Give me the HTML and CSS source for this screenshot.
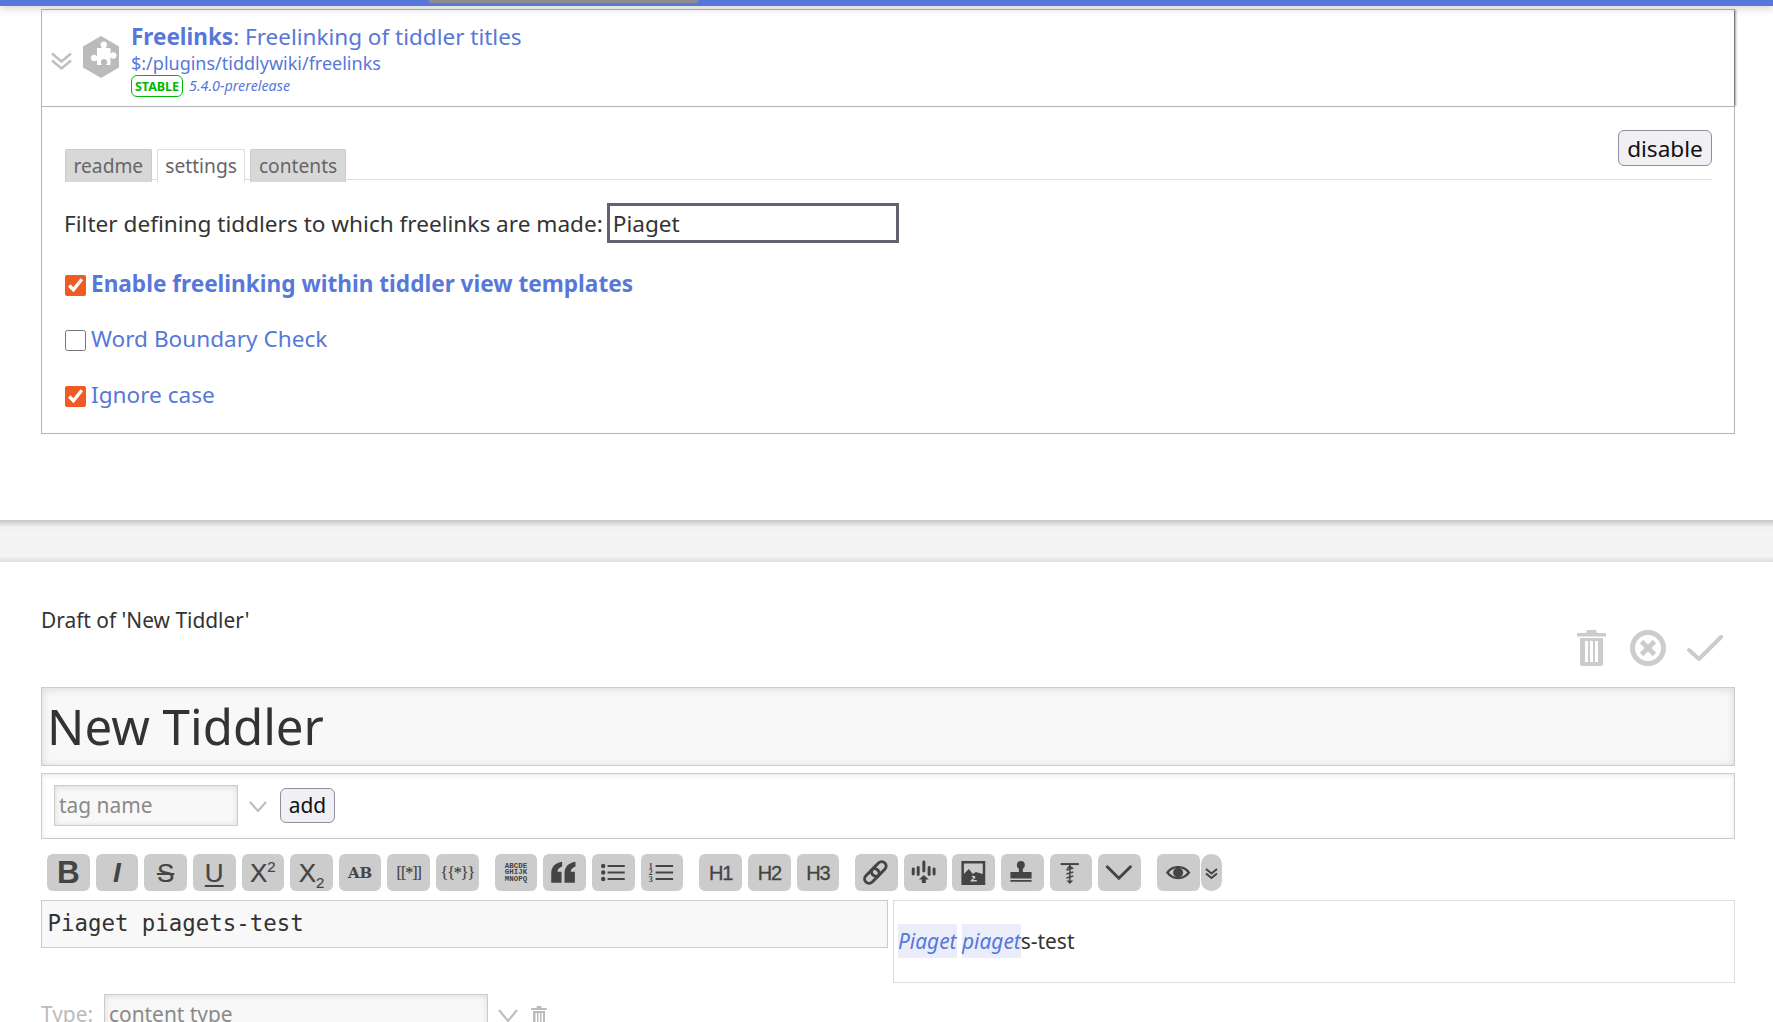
FILE: index.html
```html
<!DOCTYPE html>
<html lang="en">
<head>
<meta charset="utf-8">
<title>Freelinks</title>
<link rel="stylesheet" href="styles.css">
</head>
<body>
<div class="topbar"><div class="progress"></div></div>
<main class="main">
  <section class="plugin">
    <header class="plugin-head">
      <svg class="chev" viewBox="0 0 21 18"><path d="M1 1.500l9.500 8 9.500-8M1 8.500l9.500 8 9.500-8"/></svg>
      <svg class="hex" viewBox="0 0 36 42"><path class="hex-bg" d="M18 0L36 10.500V31.500L18 42L0 31.500V10.500Z"/><path class="hex-fg" d="M14 12h5c-1-1.500-1.500-2.500-1.500-3.500 0-2 1.600-3 3.300-3s3.200 1 3.200 3c0 1-.5 2-1.500 3.500h5v5.500c1.200-.9 2-1.300 3-1.300 1.900 0 3 1.500 3 3.300s-1.100 3.300-3 3.300c-1 0-1.800-.4-3-1.300V29h-4.500c.8-1.200 1.200-2 1.200-3 0-1.800-1.500-3-3.200-3s-3.200 1.200-3.200 3c0 1 .4 1.800 1.200 3H14v-5c-1.200.9-2 1.200-3 1.200-1.900 0-3.200-1.400-3.200-3.200s1.300-3.200 3.200-3.200c1 0 1.800.3 3 1.200Z"/></svg>
      <div class="plugin-info">
        <div class="plugin-title"><b>Freelinks</b>: Freelinking of tiddler titles</div>
        <div class="plugin-path">$:/plugins/tiddlywiki/freelinks</div>
        <div class="plugin-meta"><span class="stable">STABLE</span><i class="version">5.4.0-prerelease</i></div>
      </div>
    </header>
    <div class="plugin-body">
      <div class="tabs">
        <div class="tab-list">
          <span class="tab">readme</span>
          <span class="tab tab-active">settings</span>
          <span class="tab">contents</span>
        </div>
        <button class="disable">disable</button>
      </div>
      <div class="filter-row">
        <span>Filter defining tiddlers to which freelinks are made:</span>
        <input class="filter-input" value="Piaget">
      </div>
      <label class="check-row check-first"><input type="checkbox" checked><b>Enable freelinking within tiddler view templates</b></label>
      <label class="check-row"><input type="checkbox">Word Boundary Check</label>
      <label class="check-row"><input type="checkbox" checked>Ignore case</label>
    </div>
  </section>
</main>
<div class="band"></div>
<main class="main">
  <div class="draft-head">
    <div class="draft-title">Draft of 'New Tiddler'</div>
    <div class="draft-actions">
      <svg class="act-trash" viewBox="0 0 29 36"><path d="M10 0h9l1 3h8a1.500 1.500 0 0 1 0 3.500H1A1.500 1.500 0 0 1 1 3h8ZM3 8h23v26a2 2 0 0 1-2 2H5a2 2 0 0 1-2-2ZM8 11v21h3V11Zm5 0v21h3V11Zm5 0v21h3V11Z" fill-rule="evenodd"/></svg>
      <svg class="act-close" viewBox="0 0 36 36"><circle cx="18" cy="18" r="15.500"/><path d="M11.500 11.500l13 13M24.500 11.500l-13 13"/></svg>
      <svg class="act-check" viewBox="0 0 36 26"><path d="M2 15l10 9L34 2"/></svg>
    </div>
  </div>
  <input class="title-input" value="New Tiddler">
  <div class="tag-box">
    <input class="tag-input" placeholder="tag name">
    <svg class="tag-chev" viewBox="0 0 18 11"><path d="M1 1l8 9 8-9"/></svg>
    <button class="add">add</button>
  </div>
  <div class="toolbar">
    <div class="tb-group">
      <span class="tb t-bold">B</span>
      <span class="tb t-ital">I</span>
      <span class="tb t-reg"><span class="t-strike">S</span></span>
      <span class="tb t-reg"><span class="t-under">U</span></span>
      <span class="tb t-reg"><span>X<sup>2</sup></span></span>
      <span class="tb t-reg"><span>X<sub>2</sub></span></span>
      <span class="tb t-ab">AB</span>
      <span class="tb t-code">[[*]]</span>
      <span class="tb t-code">{{*}}</span>
    </div>
    <div class="tb-group">
      <span class="tb t-alpha"><span>ABCDE<br>GHIJK<br>MNOPQ</span></span>
      <span class="tb"><svg class="ic" viewBox="0 0 43 37"><path class="fill" d="M8.300 19C8.300 13 12 9 19.300 7.700V12.500C17 13.200 15 14.500 14.500 17.700H18.700V28.700H8.300Z"/><path class="fill" d="M21.700 19C21.700 13 25.400 9 32.700 7.700V12.500C30.400 13.200 28.400 14.500 27.900 17.700H32.100V28.700H21.700Z"/></svg></span>
      <span class="tb"><svg class="ic" viewBox="0 0 43 37"><circle class="fill" cx="11.300" cy="12" r="2.200"/><circle class="fill" cx="11.300" cy="18.500" r="2.200"/><circle class="fill" cx="11.300" cy="25" r="2.200"/><path class="line" d="M15.700 12H33M15.700 18.500H33M15.700 25H33"/></svg></span>
      <span class="tb"><svg class="ic" viewBox="0 0 43 37"><text class="num" x="7.700" y="14.500">1</text><text class="num" x="7.700" y="21.500">2</text><text class="num" x="7.700" y="28">3</text><path class="line" d="M14.700 12H32.300M14.700 18.500H32.300M14.700 25H32.300"/></svg></span>
    </div>
    <div class="tb-group">
      <span class="tb t-h">H1</span>
      <span class="tb t-h">H2</span>
      <span class="tb t-h">H3</span>
    </div>
    <div class="tb-group">
      <span class="tb"><svg class="ic" viewBox="0 0 43 37"><g class="line thick"><rect x="19.500" y="6.400" width="9" height="17" rx="4.500" transform="rotate(45 24 14.900)"/><rect x="12.500" y="13.600" width="9" height="17" rx="4.500" transform="rotate(45 17 22.100)"/></g></svg></span>
      <span class="tb"><svg class="ic" viewBox="0 0 43 37"><path class="line thick" d="M9.300 15v5M14.300 13.500v7M20 8v9M25.300 13.500v7M30.300 15v5"/><path class="fill" d="M20 21l5 4.500h-3v3.500h-4v-3.500h-3Z"/></svg></span>
      <span class="tb"><svg class="ic" viewBox="0 0 43 37"><path class="fill" fill-rule="evenodd" d="M9.500 7h24v24h-24ZM12 9.500V20l5-5 4 5 3-2 7 2V9.500ZM20 22c2-.5 4 .5 3.500 2l-2.500 2h4v1.500h-6.500c0-2 3.500-2.500 3-3.800-.3-.5-1-.5-1.500 0Z"/></svg></span>
      <span class="tb"><svg class="ic" viewBox="0 0 43 37"><circle class="fill" cx="20" cy="11" r="4"/><path class="fill" d="M18 13h4v5h8.800v6.500H9.500V18H18ZM9.500 26h21.300v1.800H9.500Z"/></svg></span>
      <span class="tb"><svg class="ic" viewBox="0 0 43 37"><path class="line" d="M10.700 10H29"/><path class="zig" d="M20 11v18M16.500 16l7-2M16.500 20l7-2M16.500 24l7-2"/><path class="fill" d="M20 11l3.500 3.500h-7ZM20 30l-3.500-3.500h7Z"/></svg></span>
      <span class="tb"><svg class="ic" viewBox="0 0 43 37"><path class="line thick" d="M9.300 12.700L21 24.300 32.700 12.700"/></svg></span>
    </div>
    <div class="tb-group tb-last">
      <span class="tb"><svg class="ic" viewBox="0 0 43 37"><path class="fill" fill-rule="evenodd" d="M9 18.600C12 14 16.500 12 21.300 12s9.300 2 12.300 6.600c-3 4.600-7.500 6.700-12.300 6.700S12 23.200 9 18.600ZM12 18.600c2.500 3 5.700 4.700 9.300 4.700s6.800-1.700 9.300-4.700c-2.500-3-5.700-4.600-9.300-4.600s-6.800 1.600-9.300 4.600Z"/><circle class="fill" cx="21.300" cy="18.600" r="5"/></svg></span>
      <span class="tb tb-more"><svg class="ic" viewBox="0 0 21 37"><path class="line" d="M5 15l5.500 4.500L16 15M5 19.500l5.500 4.500 5.500-4.500"/></svg></span>
    </div>
  </div>
  <div class="editor">
    <div class="editor-text">Piaget piagets-test</div>
    <div class="preview"><a class="hl">Piaget</a> <a class="hl">piaget</a>s-test</div>
  </div>
  <div class="type-row">
    <span class="type-label">Type:</span>
    <input class="type-input" placeholder="content type">
    <svg class="type-chev" viewBox="0 0 20 13"><path d="M1 1l9 11 9-11"/></svg>
    <svg class="type-trash" viewBox="0 0 16 20"><path d="M6 0h4l.5 2H15a1 1 0 0 1 0 2H1a1 1 0 0 1 0-2h4.500ZM2 5h12v15H2ZM4.500 7v13h1.500V7Zm3 0v13h1.500V7Zm3 0v13h1.500V7Z" fill-rule="evenodd"/></svg>
  </div>
</main>
</body>
</html>
```
FILE: styles.css
```css
* { box-sizing: border-box; }
html, body { margin: 0; height: 100%; overflow: hidden; background: #fff; }
body { font-family: "Noto Sans", sans-serif; font-size: 22.6px; color: #333; }

.topbar { height: 6px; background: #5778d8; box-shadow: 0 2px 8px rgba(0,0,0,.22); }
.progress { width: 269px; height: 3px; margin-left: 429px; background: #8c8c90; }

.main { padding: 3px 38px 0 41px; }

.plugin { border: 1px solid #b5b5b5; border-top-color: #aaa; height: 425px; }
.plugin-head { height: 98px; display: flex; align-items: flex-start; border-bottom: 1px solid #b5b5b5; box-shadow: 3px 0 2px -1px rgba(0,0,0,.35); margin-top: -1px; }
.chev { width: 21px; height: 18px; margin: 43px 0 0 9px; flex: none; }
.chev path { fill: none; stroke: #c0c0c0; stroke-width: 2.500; }
.hex { width: 36px; height: 42px; margin: 27px 0 0 11px; flex: none; }
.hex-bg { fill: #bbb; }
.hex-fg { fill: #fff; }
.plugin-info { margin: 12px 0 0 12px; color: #5778d8; }
.plugin-title { font-size: 22.500px; line-height: 32px; }
.plugin-path { font-size: 18px; line-height: 26px; margin-top: -3px; }
.plugin-meta { display: flex; align-items: center; height: 22px; margin-top: -1px; }
.stable { width: 52px; height: 22px; border: 1px solid #00b800; border-radius: 6px; color: #00b800; font-size: 12.500px; font-weight: 700; display: flex; align-items: center; justify-content: center; }
.version { font-size: 14.300px; margin: -2px 0 0 6px; }

.plugin-body { padding: 23px 22px 0 23px; }
.tabs { display: flex; justify-content: space-between; align-items: flex-start; height: 50px; border-bottom: 1px solid #dedede; }
.tab-list { display: flex; gap: 5px; margin-top: 19px; }
.tab { height: 33px; background: #d8d8d8; border: 1px solid #ccc; border-bottom: none; border-radius: 2px 2px 0 0; padding: 0 7.500px; font-size: 19.200px; line-height: 32px; color: #666; }
.tab-active { background: #fff; border-color: #ddd; }
.disable { width: 94px; height: 36px; padding: 0; background: #efeff4; border: 1px solid #8f8f9d; border-radius: 6px; font: 22.600px "Noto Sans", sans-serif; color: #111; }

.filter-row { display: flex; align-items: center; gap: 4px; margin: 23px 0 0 -1px; height: 40px; }
.filter-input { width: 292px; height: 40px; border: 3px solid #626270; padding: 0 3px; font: 22.600px "Noto Sans", sans-serif; color: #333; background: #fff; outline: none; }

.check-row { display: flex; align-items: center; color: #5778d8; height: 32px; margin-top: 23.500px; gap: 5px; }
.check-first { margin-top: 24px; }
.check-row input { width: 21px; height: 21px; margin: 4px 0 0; accent-color: #f05a24; flex: none; }

.band { height: 42px; margin-top: 86px; background: linear-gradient(#c6c6c6, #f0f0f0 7px, #f4f4f4 12px, #f4f4f4 36px, #dedede); }

.draft-head { display: flex; justify-content: space-between; align-items: flex-start; height: 122px; padding-top: 39px; }
.draft-title { font-size: 20.900px; line-height: 32px; color: #333; }
.draft-actions { display: flex; align-items: center; margin-top: 26px; height: 36px; }
.act-trash { width: 29px; height: 36px; fill: #ccc; }
.act-close { width: 36px; height: 36px; margin-left: 24px; fill: none; stroke: #ccc; stroke-width: 5; }
.act-check { width: 36px; height: 26px; margin: 0 12px 0 21px; fill: none; stroke: #ccc; stroke-width: 4; stroke-linecap: round; stroke-linejoin: round; }

.title-input { display: block; width: 100%; height: 79px; padding: 0 5px 2px; border: 1px solid #ccc; background: #f8f8f8; box-shadow: inset 0 1px 8px rgba(0,0,0,.13); font: 49.200px "Noto Sans", sans-serif; color: #333; outline: none; }

.tag-box { display: flex; align-items: center; height: 66px; margin-top: 7px; border: 1px solid #ccc; background: #fff; box-shadow: inset 0 1px 5px rgba(0,0,0,.1); padding: 0 0 2px 12px; }
.tag-input { width: 184px; height: 41px; padding: 0 4px; border: 1px solid #ccc; background: #f8f8f8; box-shadow: inset 0 1px 6px rgba(0,0,0,.12); font: 20.900px "Noto Sans", sans-serif; outline: none; }
.tag-input::placeholder, .type-input::placeholder { color: #8a8a8a; opacity: 1; }
.tag-chev { width: 18px; height: 11px; margin: 3px 0 0 11px; fill: none; stroke: #bbb; stroke-width: 2; }
.add { width: 55px; height: 35px; margin-left: 13px; padding: 0; background: #efeff4; border: 1px solid #8f8f9d; border-radius: 6px; font: 20.900px "Noto Sans", sans-serif; color: #111; }

.toolbar { display: flex; gap: 16px; margin: 15px 0 0 6px; }
.tb-group { display: flex; gap: 5.950px; }
.tb-last { gap: 1px; }
.tb { width: 42.700px; height: 37px; background: #ccc; border-radius: 6px; display: flex; align-items: center; justify-content: center; color: #444; font-family: "Liberation Sans", sans-serif; line-height: 1; }
.tb-more { width: 21px; border-radius: 10px; }
.ic { width: 100%; height: 100%; display: block; }
.fill { fill: #444; }
.line { fill: none; stroke: #444; stroke-width: 2; }
.thick { stroke-width: 3; stroke-linecap: round; }
.zig { fill: none; stroke: #444; stroke-width: 1.500; }
.num { font: 700 8px "Liberation Serif", serif; fill: #444; }
.t-bold { font-size: 31.500px; font-weight: 700; }
.t-ital { font-size: 28px; font-weight: 700; font-style: italic; }
.t-reg { font-size: 26px; -webkit-text-stroke: .2px #444; }
.t-reg sup, .t-reg sub { font-size: 15px; line-height: 0; }
.t-strike { text-decoration: line-through; text-decoration-thickness: 2px; }
.t-under { text-decoration: underline; text-decoration-thickness: 2px; text-underline-offset: 3px; }
.t-ab { font: 700 15px "DejaVu Serif", serif; }
.t-code { font: 16px "Liberation Serif", serif; letter-spacing: -1px; -webkit-text-stroke: .2px #444; }
.t-alpha { font: 700 7.500px/6.500px "Liberation Mono", monospace; text-align: center; }
.t-h { font-size: 20px; letter-spacing: -1.300px; -webkit-text-stroke: .3px #444; }

.editor { display: flex; align-items: flex-start; gap: 5px; margin-top: 9px; }
.editor-text { flex: 0 0 847px; height: 48px; padding: 0 5.500px; border: 1px solid #ccc; background: #f8f8f8; font: 22.400px/44px "DejaVu Sans Mono", monospace; color: #333; }
.preview { flex: 1; height: 83px; padding: 0 4px; border: 1px solid #ddd; font-size: 20.900px; line-height: 80px; color: #333; }
.hl { background: #ebeefa; color: #5778d8; font-style: italic; padding: 3px 0; }

.type-row { display: flex; align-items: flex-start; margin-top: 11px; color: #bbb; }
.type-label { font-size: 20.900px; width: 63px; line-height: 40px; }
.type-input { width: 384px; height: 40px; padding: 0 4px; border: 1px solid #ccc; background: #f8f8f8; box-shadow: inset 0 1px 6px rgba(0,0,0,.12); font: 20.900px "Noto Sans", sans-serif; outline: none; }
.type-chev { width: 20px; height: 13px; margin: 15px 0 0 10px; fill: none; stroke: #bbb; stroke-width: 2; }
.type-trash { width: 16px; height: 20px; margin: 12px 0 0 13px; fill: #bbb; }
```
